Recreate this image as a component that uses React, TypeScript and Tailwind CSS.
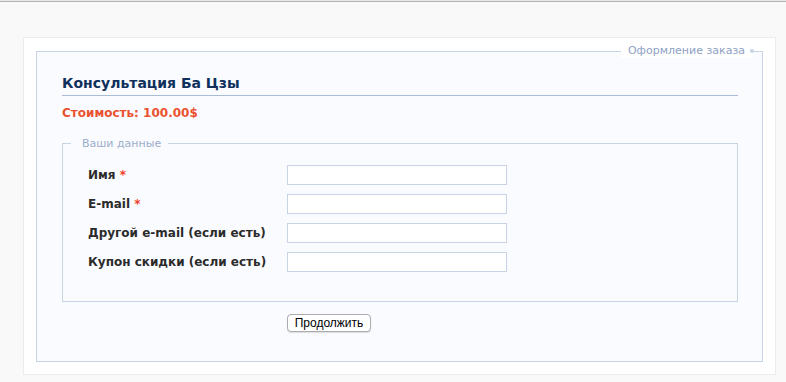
import React from 'react';

const fields = [
  { label: 'Имя', required: true },
  { label: 'E-mail', required: true },
  { label: 'Другой e-mail (если есть)', required: false },
  { label: 'Купон скидки (если есть)', required: false },
];

const App: React.FC = () => {
  return (
    <div className="min-h-[382px] bg-[#f9f9f9] font-['DejaVu_Sans',Verdana,sans-serif]">
      <div className="h-px bg-[#e8e8e8]" />
      <div className="h-px bg-[#b4b4b4]" />
      <div className="pt-[35px] pl-[23px] pr-[10px]">
        <div className="w-[753px] bg-white border border-[#ececec] pt-[6px] pb-[12px] pl-[12px] pr-[12px]">
          <fieldset className="border border-[#c6d4e6] bg-[#fafbfe] pl-[25px] pr-[24px] pb-[29px]">
            <legend className="ml-auto mr-[-15px] bg-white pl-[7px] pr-0 h-[14px] leading-[14px] text-[11px] text-[#8ea2c4] flex items-center">
              Оформление заказа
              <span className="ml-[5px] mr-[-1px] w-[4px] h-[4px] rounded-full bg-[#c6d4e6]" />
            </legend>

            <h1 className="mt-[17px] text-[14px] leading-[17px] font-bold text-[#0f305c] border-b border-[#a9bcd6] pb-[3px]">
              Консультация Ба Цзы
            </h1>
            <p className="mt-[10px] text-[12px] leading-[15px] font-bold text-[#ea5230]">
              Стоимость: 100.00$
            </p>

            <fieldset className="mt-[16px] border border-[#c6d4e6] pl-[25px] pb-[29px]">
              <legend className="ml-[-17px] pl-[11px] pr-[7px] text-[11px] leading-[13px] text-[#9aadcb]">
                Ваши данные
              </legend>
              <div className="mt-[15px] grid grid-cols-[199px_220px] gap-y-[9px] items-center">
                {fields.map((f) => (
                  <React.Fragment key={f.label}>
                    <label className="text-[12px] font-bold text-[#2b2b2b]">
                      {f.label}
                      {f.required && <span className="text-[#ee3d2a]"> *</span>}
                    </label>
                    <input
                      type="text"
                      className="h-[20px] w-[220px] bg-white border border-[#c6d4e6] outline-none"
                    />
                  </React.Fragment>
                ))}
              </div>
            </fieldset>

            <div className="mt-[12px] pl-[225px] flex">
              <button
                type="button"
                className="h-[18px] w-[84px] rounded-[4px] border border-[#acacac] bg-white shadow-[0_1px_1px_rgba(0,0,0,0.12)] text-[12px] leading-[16px] text-black font-['Liberation_Sans',Arial,sans-serif]"
              >
                Продолжить
              </button>
            </div>
          </fieldset>
        </div>
      </div>
    </div>
  );
};

export default App;
